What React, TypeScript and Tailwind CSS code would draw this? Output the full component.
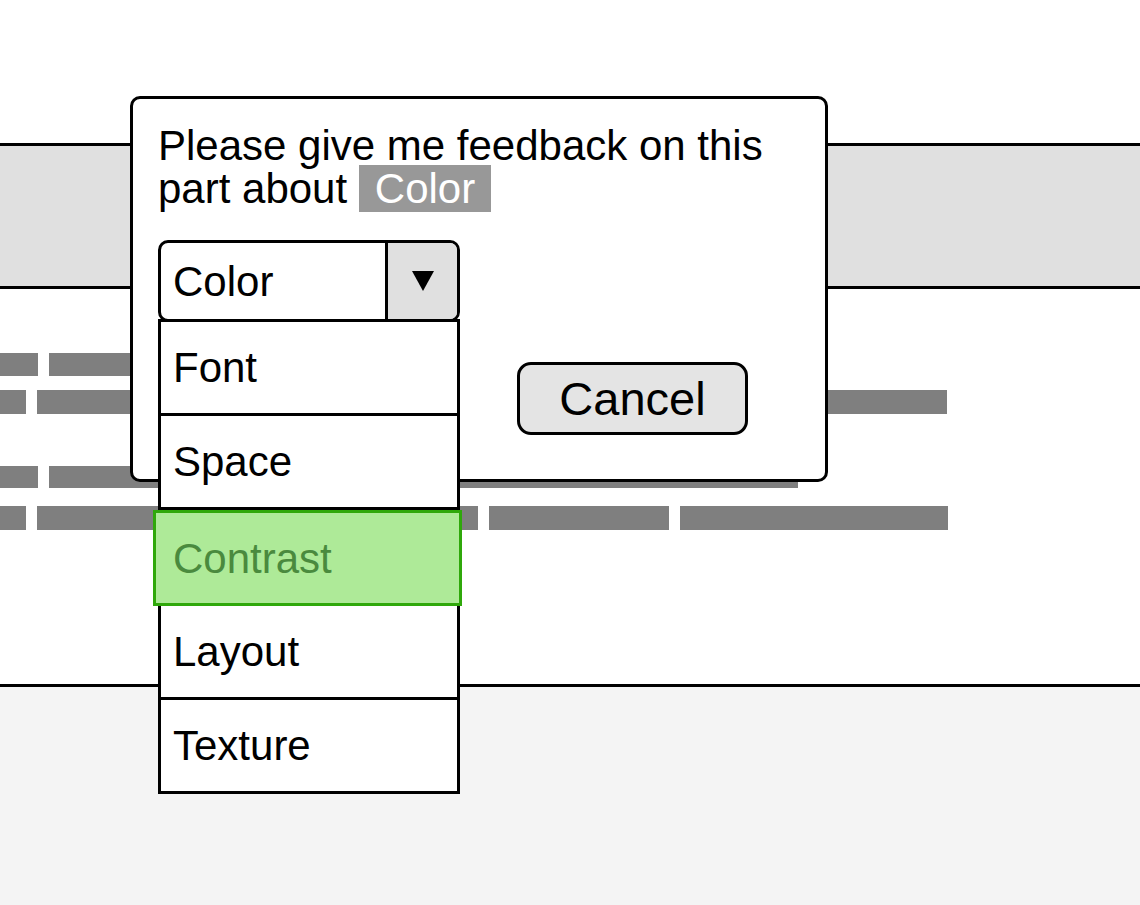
import React from "react";

const OPTIONS = ["Font", "Space", "Contrast", "Layout", "Texture"];
const SELECTED = "Contrast";

// grey placeholder "text" lines behind the popover
const ROWS: { h: string; mt: string; bars: string[] }[] = [
  { h: "h-[23px]", mt: "mt-[64px]", bars: ["w-[38px]", "w-[250px]", "w-[400px]"] },
  { h: "h-[24px]", mt: "mt-[14px]", bars: ["w-[26px]", "w-[363px]", "w-[536px]"] },
  { h: "h-[22px]", mt: "mt-[52px]", bars: ["w-[38px]", "w-[250px]", "w-[488px]"] },
  { h: "h-[24px]", mt: "mt-[18px]", bars: ["w-[26px]", "w-[441px]", "w-[180px]", "w-[268px]"] },
];

function Dropdown() {
  return (
    <div className="relative w-[302px]">
      {/* closed select */}
      <div className="flex h-[82px] rounded-[10px] border-[3px] border-black bg-white overflow-hidden">
        <div className="flex-1 flex items-center pl-[12px]">Color</div>
        <div className="w-[72px] flex items-center justify-center border-l-[3px] border-black bg-[#e0e0e0]">
          <svg width="22" height="20" viewBox="0 0 22 20">
            <polygon points="0,0 22,0 11,20" fill="#000" />
          </svg>
        </div>
      </div>
      {/* open list */}
      <div className="absolute left-0 top-[79px] w-[302px] border-x-[3px] border-t-[3px] border-black bg-white">
        {OPTIONS.map(o =>
          o === SELECTED ? (
            <div key={o}
              className="relative -ml-[8px] -mr-[5px] h-[96px] flex items-center pl-[17px] border-[3px] border-[#2fa80a] bg-[#aeea98] text-[#4a8a3e]">
              {o}
            </div>
          ) : (
            <div key={o} className="h-[94px] flex items-center pl-[12px] border-b-[3px] border-black">
              {o}
            </div>
          )
        )}
      </div>
    </div>
  );
}

export default function App() {
  return (
    <div className="relative min-h-screen flex flex-col bg-white text-black text-[42px] font-['Liberation_Sans',Arial,sans-serif] overflow-hidden">
      {/* wireframe page behind */}
      <div className="h-[143px]" />
      <div className="h-[146px] border-y-[3px] border-black bg-[#e0e0e0]" />
      <div className="h-[395px]">
        {ROWS.map((r, i) => (
          <div key={i} className={`flex gap-[11px] ${r.mt}`}>
            {r.bars.map((w, j) => (
              <div key={j} className={`${w} ${r.h} bg-[#7f7f7f]`} />
            ))}
          </div>
        ))}
      </div>
      <div className="flex-1 border-t-[3px] border-black bg-[#f4f4f4]" />

      {/* feedback popover */}
      <div className="absolute left-[130px] top-[96px] w-[698px] h-[386px] rounded-[10px] border-[3px] border-black bg-white pl-[25px] pt-[25px]">
        <p className="leading-[43px]">
          Please give me feedback on this
          <br />
          part about <span className="bg-[#989898] text-white px-[16px]">Color</span>
        </p>
        <div className="mt-[30px] flex items-start gap-[57px]">
          <Dropdown />
          <button className="mt-[122px] w-[231px] h-[73px] rounded-[14px] border-[3px] border-black bg-[#e4e4e4] text-[47px] leading-none">
            Cancel
          </button>
        </div>
      </div>
    </div>
  );
}
